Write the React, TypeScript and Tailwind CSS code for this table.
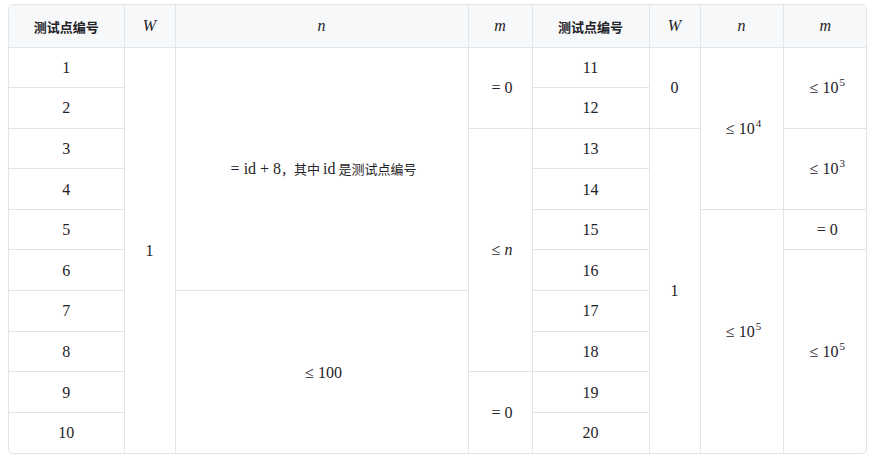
import type { ReactNode } from 'react';

// ── Helpers ─────────────────────────────────────────────────────────────────

function M({ children }: { children: ReactNode }) {
    return <span className="font-['Liberation_Serif'] text-[16px]">{children}</span>;
}

function Op({ children }: { children: ReactNode }) {
    return <span className="mx-[4px]">{children}</span>;
}

function C({ children, bold = false }: { children: ReactNode; bold?: boolean }) {
    return bold ? (
        <span className="font-['Noto_Sans_CJK_SC'] text-[13px] font-bold">{children}</span>
    ) : (
        <span className="font-['Noto_Sans_CJK_SC'] text-[13px]">{children}</span>
    );
}

function I({ children }: { children: ReactNode }) {
    return <span className="italic">{children}</span>;
}

function Pow({ base, exp }: { base: string; exp: string }) {
    return (
        <M>
            <Op>≤</Op>{base}
            <sup className="text-[11px] align-baseline relative -top-[7px] ml-[1px]">{exp}</sup>
        </M>
    );
}

function Td({ rows = 1, children }: { rows?: number; children?: ReactNode }) {
    return (
        <td rowSpan={rows} className="border border-[#e1e4e8] text-center align-middle p-0">
            {children}
        </td>
    );
}

function Th({ children }: { children: ReactNode }) {
    return (
        <th className="border border-[#e1e4e8] text-center align-middle p-0 font-normal">
            {children}
        </th>
    );
}

// ── Component ───────────────────────────────────────────────────────────────

export default function App() {
    const label = <C bold>测试点编号</C>;

    return (
        <div className="bg-white w-[879px] h-[464px] pt-[4px] pl-[8px] text-[#1f2328]">
            <div className="w-[859px] border border-[#e1e4e8] rounded-[5px] overflow-hidden">
                <table className="w-full table-fixed border-collapse border-hidden">
                    <colgroup>
                        <col className="w-[115px]" />
                        <col className="w-[51px]" />
                        <col className="w-[293px]" />
                        <col className="w-[64px]" />
                        <col className="w-[117px]" />
                        <col className="w-[51px]" />
                        <col className="w-[83px]" />
                        <col className="w-[84px]" />
                    </colgroup>
                    <thead className="bg-[#f7f8fa]">
                        <tr className="h-[42px]">
                            <Th>{label}</Th>
                            <Th><M><I>W</I></M></Th>
                            <Th><M><I>n</I></M></Th>
                            <Th><M><I>m</I></M></Th>
                            <Th>{label}</Th>
                            <Th><M><I>W</I></M></Th>
                            <Th><M><I>n</I></M></Th>
                            <Th><M><I>m</I></M></Th>
                        </tr>
                    </thead>
                    <tbody>
                        <tr className="h-[40.6px]">
                            <Td><M>1</M></Td>
                            <Td rows={10}><M>1</M></Td>
                            <Td rows={6}>
                                <M><Op>=</Op>id<Op>+</Op>8</M>
                                <C>，其中 </C>
                                <M>id</M>
                                <C> 是测试点编号</C>
                            </Td>
                            <Td rows={2}><M><Op>=</Op>0</M></Td>
                            <Td><M>11</M></Td>
                            <Td rows={2}><M>0</M></Td>
                            <Td rows={4}><Pow base="10" exp="4" /></Td>
                            <Td rows={2}><Pow base="10" exp="5" /></Td>
                        </tr>
                        <tr className="h-[40.6px]">
                            <Td><M>2</M></Td>
                            <Td><M>12</M></Td>
                        </tr>
                        <tr className="h-[40.6px]">
                            <Td><M>3</M></Td>
                            <Td rows={6}><M><Op>≤</Op><I>n</I></M></Td>
                            <Td><M>13</M></Td>
                            <Td rows={8}><M>1</M></Td>
                            <Td rows={2}><Pow base="10" exp="3" /></Td>
                        </tr>
                        <tr className="h-[40.6px]">
                            <Td><M>4</M></Td>
                            <Td><M>14</M></Td>
                        </tr>
                        <tr className="h-[40.6px]">
                            <Td><M>5</M></Td>
                            <Td><M>15</M></Td>
                            <Td rows={6}><Pow base="10" exp="5" /></Td>
                            <Td><M><Op>=</Op>0</M></Td>
                        </tr>
                        <tr className="h-[40.6px]">
                            <Td><M>6</M></Td>
                            <Td><M>16</M></Td>
                            <Td rows={5}><Pow base="10" exp="5" /></Td>
                        </tr>
                        <tr className="h-[40.6px]">
                            <Td><M>7</M></Td>
                            <Td rows={4}><M><Op>≤</Op>100</M></Td>
                            <Td><M>17</M></Td>
                        </tr>
                        <tr className="h-[40.6px]">
                            <Td><M>8</M></Td>
                            <Td><M>18</M></Td>
                        </tr>
                        <tr className="h-[40.6px]">
                            <Td><M>9</M></Td>
                            <Td rows={2}><M><Op>=</Op>0</M></Td>
                            <Td><M>19</M></Td>
                        </tr>
                        <tr className="h-[40.6px]">
                            <Td><M>10</M></Td>
                            <Td><M>20</M></Td>
                        </tr>
                    </tbody>
                </table>
            </div>
        </div>
    );
}
